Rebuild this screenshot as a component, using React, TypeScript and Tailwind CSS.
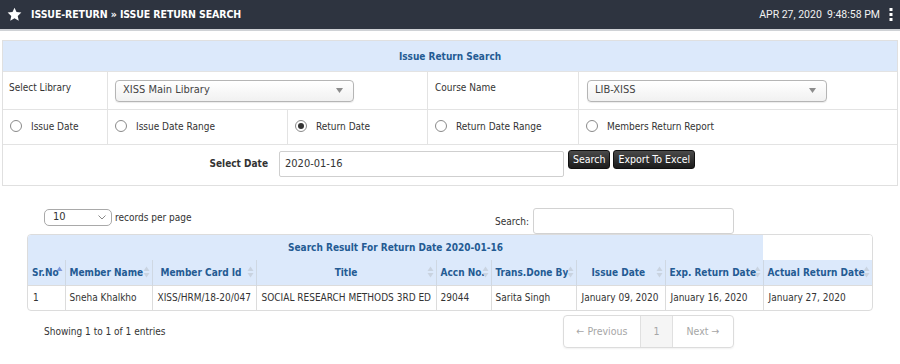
import React from "react";

const F = "font-['DejaVu_Sans_Condensed','DejaVu_Sans',sans-serif]";

function Radio({ checked = false }: { checked?: boolean }) {
  return (
    <span className="inline-flex h-[12px] w-[12px] items-center justify-center rounded-full border border-[#8a8a8a] bg-white">
      {checked && <span className="h-[6px] w-[6px] rounded-full bg-[#333]" />}
    </span>
  );
}

function SortIcon({ active = false }: { active?: boolean }) {
  return (
    <svg width="7" height="13" viewBox="0 0 7 13" className="absolute right-[2px] top-1/2 -translate-y-1/2">
      <path d="M3.5 1 L6.5 5.5 L0.5 5.5 Z" fill={active ? "#7d97d9" : "#c9d3e0"} />
      {!active && <path d="M3.5 12 L6.5 7.5 L0.5 7.5 Z" fill="#c9d3e0" />}
    </svg>
  );
}

function FakeSelect({ value, className }: { value: string; className: string }) {
  return (
    <div
      className={`flex h-[22px] items-center justify-between rounded-[4px] border border-[#b5b5b5] bg-gradient-to-b from-white to-[#f1f1f1] pl-[7px] pr-[10px] text-[11px] text-[#444] shadow-[0_1px_1px_rgba(0,0,0,0.08)] ${className}`}
    >
      <span>{value}</span>
      <svg width="7" height="5" viewBox="0 0 7 5">
        <path d="M0 0 L7 0 L3.5 5 Z" fill="#8c8c8c" />
      </svg>
    </div>
  );
}

export default function App() {
  const cell = "border-l border-[#e3e3e3] flex items-center";
  const th = "relative border-l border-[#cfd8e3] px-[5px] font-bold text-[#245b93] whitespace-nowrap";
  const td = "border-l border-t border-[#dcdcdc] px-[5px] whitespace-nowrap";
  return (
    <div className={`${F} h-[364px] w-[900px] overflow-hidden bg-white text-[10px] text-[#333]`}>
      {/* top bar */}
      <div className="flex h-[31px] items-center justify-between border-b-[2px] border-[#cfd2d6] bg-[#2e3440] pl-[7px] pr-[7px] text-white">
        <div className="flex items-center gap-[9px]">
          <svg width="15" height="15" viewBox="0 0 24 24">
            <path
              d="M12 1 L15.2 8.1 L23 8.9 L17.2 14.2 L18.8 22 L12 18 L5.2 22 L6.8 14.2 L1 8.9 L8.8 8.1 Z"
              fill="white"
            />
          </svg>
          <span className="text-[10.5px] font-bold tracking-[-0.1px]">ISSUE-RETURN » ISSUE RETURN SEARCH</span>
        </div>
        <div className="flex items-center gap-[9px]">
          <span className="font-['Roboto',sans-serif] text-[10.5px] text-[#f2f2f2]">APR 27, 2020&nbsp;&nbsp;9:48:58 PM</span>
          <svg width="4" height="13" viewBox="0 0 4 13">
            <rect x="0.5" y="0" width="3" height="3" fill="white" />
            <rect x="0.5" y="5" width="3" height="3" fill="white" />
            <rect x="0.5" y="10" width="3" height="3" fill="white" />
          </svg>
        </div>
      </div>

      {/* search panel */}
      <div className="mx-[2px] mt-[9px] border border-[#e0e0e0]">
        <div className="flex h-[31px] items-center justify-center border-b border-[#e3e3e3] bg-[#dce9fb] font-bold text-[#245b93]">
          Issue Return Search
        </div>
        <div className="grid grid-cols-[104px_180px_140px_151px_1fr]">
          {/* row 2 */}
          <div className="flex h-[38px] items-center border-b border-[#e3e3e3] pb-[6px] pl-[6px]">Select Library</div>
          <div className={`${cell} col-span-2 h-[38px] border-b border-[#e3e3e3] pl-[7px]`}>
            <FakeSelect value="XISS Main Library" className="w-[239px]" />
          </div>
          <div className={`${cell} h-[38px] border-b border-[#e3e3e3] pb-[6px] pl-[7px]`}>Course Name</div>
          <div className={`${cell} h-[38px] border-b border-[#e3e3e3] pl-[8px]`}>
            <FakeSelect value="LIB-XISS" className="w-[240px]" />
          </div>
          {/* row 3 */}
          {[
            ["Issue Date", false],
            ["Issue Date Range", false],
            ["Return Date", true],
            ["Return Date Range", false],
            ["Members Return Report", false],
          ].map(([label, checked], i) => (
            <div
              key={i}
              className={`${i > 0 ? cell : "flex items-center"} h-[35px] gap-[9px] border-b border-[#e3e3e3] pb-[2px] pl-[7px]`}
            >
              <Radio checked={checked as boolean} />
              <span>{label as string}</span>
            </div>
          ))}
        </div>
        <div className="flex h-[40px] items-start">
          <div className="w-[265px] pt-[11px] text-right font-bold">Select Date</div>
          <div className="ml-[11px] mt-[6px] flex h-[26px] w-[285px] items-center rounded-[2px] border border-[#cfcfcf] pl-[5px] text-[11px]">
            2020-01-16
          </div>
          <button className="ml-[4px] mt-[5px] h-[19px] rounded-[3px] border border-[#111] bg-gradient-to-b from-[#4a4a4a] to-[#1c1c1c] px-[4px] text-[10.5px] text-white">
            Search
          </button>
          <button className="ml-[3px] mt-[5px] h-[19px] rounded-[3px] border border-[#111] bg-gradient-to-b from-[#4a4a4a] to-[#1c1c1c] px-[4px] text-[10.5px] text-white">
            Export To Excel
          </button>
        </div>
      </div>

      {/* datatable top controls */}
      <div className="mt-[22px] flex items-start justify-between pl-[44px] pr-[166px]">
        <div className="flex items-center gap-[3px] pt-[1px]">
          <div className="flex h-[17px] w-[68px] items-center justify-between rounded-[5px] border border-[#a9a9a9] pl-[8px] pr-[5px]">
            <span className="text-[11px]">10</span>
            <svg width="8" height="5" viewBox="0 0 8 5">
              <path d="M0.5 0.5 L4 4 L7.5 0.5" fill="none" stroke="#888" strokeWidth="1" />
            </svg>
          </div>
          <span>records per page</span>
        </div>
        <div className="flex items-center gap-[4px]">
          <span>Search:</span>
          <div className="h-[26px] w-[201px] rounded-[3px] border border-[#d2d2d2]" />
        </div>
      </div>

      {/* table */}
      <div className="mx-[27px] overflow-hidden rounded-[4px] border border-[#dcdcdc]">
        <table className="w-full table-fixed border-collapse text-[10px]">
          <colgroup>
            <col className="w-[37px]" />
            <col className="w-[87px]" />
            <col className="w-[104px]" />
            <col className="w-[180px]" />
            <col className="w-[55px]" />
            <col className="w-[85px]" />
            <col className="w-[89px]" />
            <col className="w-[98px]" />
            <col />
          </colgroup>
          <thead>
            <tr className="h-[25px]">
              <th colSpan={8} className="bg-[#dce9fb] text-center font-bold text-[#245b93]">
                Search Result For Return Date 2020-01-16
              </th>
              <th className="bg-white" />
            </tr>
            <tr className="h-[25px] bg-[#dce9fb]">
              <th className={`${th} border-l-0 pl-[4px] text-left`}>
                Sr.No
                <SortIcon active />
              </th>
              <th className={`${th} pl-[4px] text-left`}>
                Member Name
                <SortIcon />
              </th>
              <th className={`${th} pl-[8px] text-left`}>
                Member Card Id
                <SortIcon />
              </th>
              <th className={`${th} text-center`}>
                Title
                <SortIcon />
              </th>
              <th className={`${th} pl-[4px] text-left`}>
                Accn No.
                <SortIcon />
              </th>
              <th className={`${th} pl-[4px] text-left`}>
                Trans.Done By
                <SortIcon />
              </th>
              <th className={`${th} pl-[15px] text-left`}>
                Issue Date
                <SortIcon />
              </th>
              <th className={`${th} pl-[4px] text-left`}>
                Exp. Return Date
                <SortIcon />
              </th>
              <th className={`${th} pl-[4px] text-left`}>
                Actual Return Date
                <SortIcon />
              </th>
            </tr>
          </thead>
          <tbody>
            <tr className="h-[25px]">
              <td className={`${td} border-l-0`}>1</td>
              <td className={`${td} pl-[4px]`}>Sneha Khalkho</td>
              <td className={`${td} px-[3px]`}>XISS/HRM/18-20/047</td>
              <td className={`${td} px-[3px]`}>SOCIAL RESEARCH METHODS 3RD ED</td>
              <td className={`${td} pl-[4px]`}>29044</td>
              <td className={`${td} pl-[4px]`}>Sarita Singh</td>
              <td className={`${td} px-[3px]`}>January 09, 2020</td>
              <td className={`${td} px-[3px]`}>January 16, 2020</td>
              <td className={`${td} px-[4px]`}>January 27, 2020</td>
            </tr>
          </tbody>
        </table>
      </div>

      {/* bottom controls */}
      <div className="mt-[4px] flex items-center justify-between pl-[44px] pr-[166px]">
        <span>Showing 1 to 1 of 1 entries</span>
        <div className="flex h-[33px] overflow-hidden rounded-[4px] border border-[#dcdcdc] text-[10.5px] text-[#a6a6a6] shadow-[0_1px_2px_rgba(0,0,0,0.06)]">
          <div className="flex w-[76px] items-center justify-center">← Previous</div>
          <div className="flex w-[32px] items-center justify-center border-l border-[#e0e0e0] bg-[#f5f5f5]">1</div>
          <div className="flex w-[61px] items-center justify-center border-l border-[#e0e0e0]">Next →</div>
        </div>
      </div>
    </div>
  );
}
